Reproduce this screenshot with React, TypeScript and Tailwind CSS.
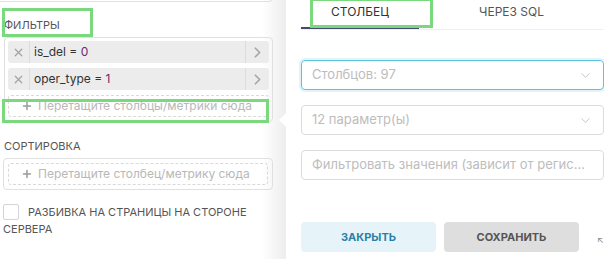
import { X, ChevronRight, ChevronDown, Plus } from 'lucide-react'

function FilterItem({ label, value }: { label: string; value: string }) {
  return (
    <div className="flex h-[22px] items-center rounded-[3px] bg-[#ececec] text-[12px] text-[#333]">
      <div className="flex h-full w-[22px] items-center justify-center border-r border-[#dcdcdc]">
        <X className="h-[13px] w-[13px] text-[#a3a3a3]" strokeWidth={2.2} />
      </div>
      <div className="flex-1 pl-[4px]">
        {label} = <span className="text-[#6b2a6e]">{value}</span>
      </div>
      <div className="flex h-full w-[24px] items-center justify-center border-l border-[#dcdcdc]">
        <ChevronRight className="h-[17px] w-[17px] text-[#a6a6a6]" strokeWidth={2.4} />
      </div>
    </div>
  )
}

function DropZone({ text }: { text: string }) {
  return (
    <div className="flex h-[22px] items-center rounded-[3px] border border-dashed border-[#d9d9d9] pl-[12px] text-[12px] text-[#b8b8b8]">
      <Plus className="mr-[5px] h-[12px] w-[12px] text-[#9a9a9a]" strokeWidth={3} />
      {text}
    </div>
  )
}

function Field({ text, focused, chevron }: { text: string; focused?: boolean; chevron?: boolean }) {
  return (
    <div
      className={
        focused
          ? 'flex h-[30px] items-center justify-between rounded-[4px] border border-[#5ac4de] px-[10px] text-[13px] text-[#bdbdbd] shadow-[0_0_0_2px_rgba(90,196,222,0.18)]'
          : 'flex h-[30px] items-center justify-between rounded-[4px] border border-[#dcdcdc] px-[10px] text-[13px] text-[#bdbdbd]'
      }
    >
      <span>{text}</span>
      {chevron && <ChevronDown className="h-[15px] w-[15px] text-[#c4c4c4]" strokeWidth={1.5} />}
    </div>
  )
}

export default function App() {
  return (
    <div className="relative flex h-[259px] w-[604px] overflow-hidden bg-white font-['Inter',sans-serif]">
      {/* Left: query controls */}
      <div className="relative w-[286px] shrink-0 bg-[linear-gradient(to_right,#ffffff_262px,#ededed)]">
        <div className="-mt-[30px] ml-[-4px] h-[32px] w-[277px] rounded-[4px] border border-[#e0e0e0]" />

        <div className="mt-[17px] pl-[4px] text-[11px] uppercase leading-[12px] text-[#555]">Фильтры</div>
        <div className="ml-[4px] mt-[6px] w-[269px] rounded-[4px] border border-[#e0e0e0] p-[3px] pb-[4px]">
          <div className="flex flex-col gap-[5px]">
            <FilterItem label="is_del" value="0" />
            <FilterItem label="oper_type" value="1" />
            <DropZone text="Перетащите столбцы/метрики сюда" />
          </div>
        </div>

        <div className="mt-[18px] pl-[4px] text-[11px] uppercase leading-[12px] text-[#555]">Сортировка</div>
        <div className="ml-[3px] mt-[6px] w-[270px] rounded-[4px] border border-[#e0e0e0] p-[4px]">
          <DropZone text="Перетащите столбец/метрику сюда" />
        </div>

        <div className="mt-[14px] pl-[3px] text-[11px] uppercase leading-[17px] text-[#555]">
          <span className="mr-[9px] inline-block h-[16px] w-[16px] rounded-[2px] border border-[#d4d4d4] align-[-4px]" />
          Разбивка на страницы на стороне сервера
        </div>

        {/* popover arrow */}
        <div className="absolute right-[-5px] top-[115px] h-[10px] w-[10px] rotate-45 bg-white" />
      </div>

      {/* Right: popover */}
      <div className="flex flex-1 flex-col bg-white pl-[15px] pr-[3px]">
        <div className="flex h-[30px] border-b border-[#f0f0f0] text-[12px] uppercase">
          <div className="w-[118px] border-b-2 border-[#454a6e] pt-[3px] text-center text-[#333]">Столбец</div>
          <div className="flex-1 pt-[3px] text-center text-[#555]">Через SQL</div>
        </div>

        <div className="mt-[30px] flex flex-col gap-[15px]">
          <Field text="Столбцов: 97" focused chevron />
          <Field text="12 параметр(ы)" chevron />
          <Field text="Фильтровать значения (зависит от регис..." />
        </div>

        <div className="mt-[42px] flex items-center gap-[8px]">
          <button className="h-[30px] w-[135px] rounded-[4px] bg-[#e6f4f9] text-[11px] font-bold uppercase text-[#2b7fa6]">
            Закрыть
          </button>
          <button className="h-[30px] w-[135px] rounded-[4px] bg-[#dedede] text-[11px] font-bold uppercase text-[#555]">
            Сохранить
          </button>
          <span className="ml-[10px] mt-[6px] text-[9px] text-[#888]">↖</span>
        </div>
      </div>

      {/* annotation boxes */}
      <div className="absolute left-[2px] top-[8px] h-[29px] w-[91px] border-[3px] border-[#7ad97c]" />
      <div className="absolute left-[2px] top-[99px] h-[24px] w-[267px] border-[3px] border-[#7ad97c]" />
      <div className="absolute left-[310px] top-[-2px] h-[30px] w-[123px] border-[3px] border-[#7ad97c]" />
    </div>
  )
}
